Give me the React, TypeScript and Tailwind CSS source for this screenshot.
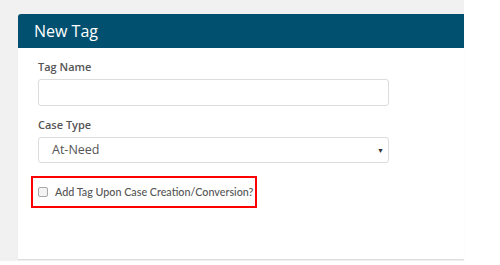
export default function App() {
  return (
    <div className="h-[265px] w-[500px] bg-white font-['Open_Sans',sans-serif]">
      <div className="h-[261px] w-[464px] bg-[#f1f1f1] pl-[18px] pt-[14px]">
        {/* Card */}
        <div className="h-[245px] overflow-hidden rounded-tl-[3px] bg-white shadow-[0_1px_1px_#dcdcdc]">
          <div className="flex h-[34px] items-center bg-[#02506f] pl-4 text-[16px] text-white">
            New Tag
          </div>

          <div className="pl-5 pr-[75px] pt-[12px]">
            <label className="block text-[11px] font-semibold leading-[14px] text-[#555]">Tag Name</label>
            <input
              type="text"
              className="mt-[5px] block h-[27px] w-full rounded-[3px] border border-[#dcdcdc] bg-white"
            />

            <label className="mt-[12px] block text-[11px] font-semibold leading-[14px] text-[#555]">
              Case Type
            </label>
            <div className="relative mt-[5px] flex h-[26px] items-center rounded-[3px] border border-[#dcdcdc] pl-[13px] text-[12.5px] text-[#555]">
              At-Need
              <span className="absolute right-[4px] top-[9px] text-[7px] leading-none text-[#333]">▼</span>
            </div>

            <div className="ml-[-7px] mt-[13px] flex h-[32px] w-[226px] items-center border-2 border-[#ff0000] pl-[5px]">
              <span className="h-[10px] w-[10px] shrink-0 rounded-[2px] border border-[#a8a8a8] bg-[#f3f3f3]" />
              <span className="ml-[7px] whitespace-nowrap font-['Lato',sans-serif] text-[10.75px] font-medium text-[#555]">
                Add Tag Upon Case Creation/Conversion?
              </span>
            </div>
          </div>
        </div>
      </div>
    </div>
  );
}
